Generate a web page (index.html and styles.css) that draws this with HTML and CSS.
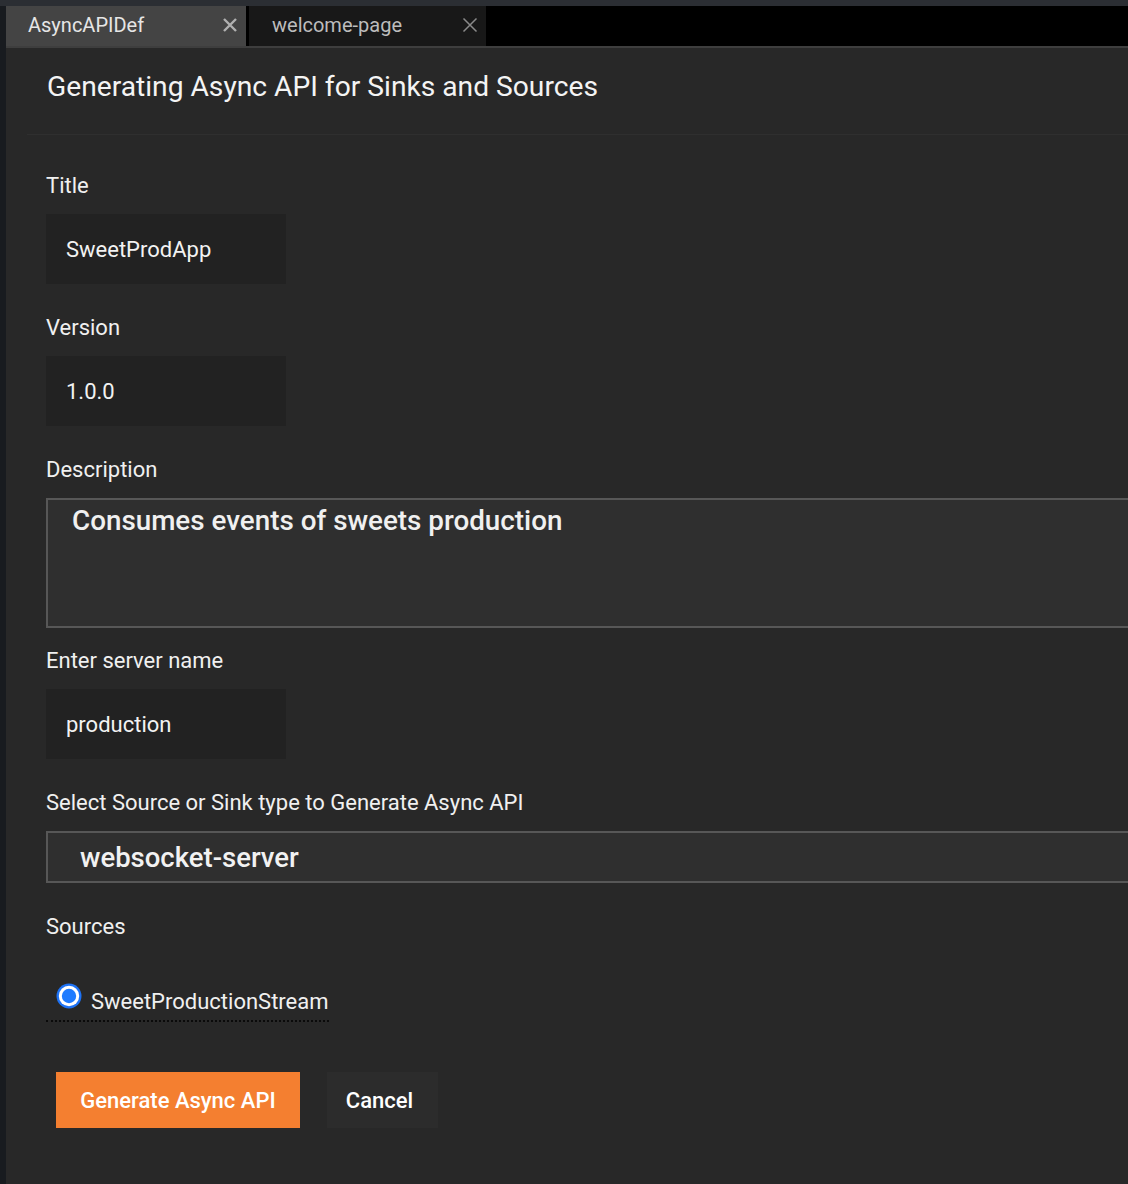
FILE: index.html
```html
<!DOCTYPE html>
<html>
<head>
<meta charset="utf-8">
<link rel="stylesheet" href="styles.css">
</head>
<body>
<div class="topstrip"></div>
<div class="shell">
  <div class="leftstrip"></div>
  <div class="main">
    <div class="tabbar">
      <div class="tab active">
        <span class="tab-label">AsyncAPIDef</span>
        <svg class="close" width="16" height="16" viewBox="0 0 16 16"><path d="M2 2 L14 14 M14 2 L2 14" stroke="#b0b0b0" stroke-width="2.4" stroke-linecap="butt"/></svg>
      </div>
      <div class="tab">
        <span class="tab-label">welcome-page</span>
        <svg class="close thin" width="16" height="16" viewBox="0 0 16 16"><path d="M1.5 1.5 L14.5 14.5 M14.5 1.5 L1.5 14.5" stroke="#8a8a8a" stroke-width="1.5"/></svg>
      </div>
    </div>
    <div class="content">
      <div class="header">
        <h1>Generating Async API for Sinks and Sources</h1>
      </div>
      <form class="form">
        <label class="label">Title</label>
        <div class="input">SweetProdApp</div>
        <label class="label">Version</label>
        <div class="input">1.0.0</div>
        <label class="label">Description</label>
        <div class="textarea">Consumes events of sweets production</div>
        <label class="label">Enter server name</label>
        <div class="input">production</div>
        <label class="label">Select Source or Sink type to Generate Async API</label>
        <div class="select">websocket-server</div>
        <label class="label">Sources</label>
        <div class="radio-row">
          <span class="radio-item">
            <svg class="radio" width="26" height="26" viewBox="0 0 26 26"><circle cx="13" cy="13" r="12.5" fill="#1d72f5"/><circle cx="13" cy="13" r="10.2" fill="#ffffff"/><circle cx="13" cy="13" r="7.2" fill="#1f7bff"/></svg>
            <span class="radio-label">SweetProductionStream</span>
          </span>
        </div>
        <div class="buttons">
          <button type="button" class="btn primary">Generate Async API</button>
          <button type="button" class="btn secondary">Cancel</button>
        </div>
      </form>
    </div>
  </div>
</div>
</body>
</html>
```
FILE: styles.css
```css
* { box-sizing: border-box; }
html, body {
  margin: 0;
  padding: 0;
  background: #282828;
  font-family: Roboto, "Liberation Sans", sans-serif;
  color: #f0f0f0;
}
body {
  width: 1128px;
  height: 1184px;
  overflow: hidden;
}
.topstrip {
  height: 6px;
  background: #2b2e33;
}
.shell {
  display: flex;
  height: 1178px;
}
.leftstrip {
  width: 6px;
  flex: none;
  background: #181b1f;
}
.main {
  flex: 1;
  min-width: 0;
  display: flex;
  flex-direction: column;
  background: #282828;
  overflow: hidden;
}
.tabbar {
  display: flex;
  height: 42px;
  background: #000;
  border-bottom: 2px solid #3e3e3e;
  flex: none;
}
.tab {
  display: flex;
  align-items: center;
  justify-content: space-between;
  height: 40px;
  font-size: 20px;
  line-height: 24px;
  padding-bottom: 2px;
}
.tab.active {
  width: 240px;
  background: #444444;
  color: #e6e6e6;
  padding-left: 22px;
  padding-right: 8px;
  margin-right: 3px;
}
.tab:not(.active) {
  width: 237px;
  background: #181818;
  color: #bdbdbd;
  padding-left: 23px;
  padding-right: 8px;
}
.close { flex: none; }
.content {
  flex: 1;
}
.header {
  margin-left: 21px;
  padding: 23px 0 31px 20px;
  border-bottom: 1px solid #2f2f2f;
}
h1 {
  margin: 0;
  font-size: 28.2px;
  line-height: 32px;
  font-weight: 400;
  color: #f4f4f4;
}
.form {
  display: flex;
  flex-direction: column;
  align-items: flex-start;
  padding: 38px 0 0 40px;
}
.label {
  display: block;
  font-size: 22px;
  line-height: 26px;
  color: #f0f0f0;
  margin-bottom: 15px;
}
.input {
  width: 240px;
  height: 70px;
  background: #222222;
  padding-left: 20px;
  display: flex;
  align-items: center;
  font-size: 22px;
  color: #f2f2f2;
  margin-bottom: 31px;
}
.textarea {
  width: 1200px;
  height: 130px;
  border: 2px solid #575757;
  background: #2f2f2f;
  padding: 5px 24px;
  font-size: 27.8px;
  line-height: 32px;
  font-weight: 500;
  color: #f0f0f0;
  margin-bottom: 20px;
}
.select {
  width: 1200px;
  height: 52px;
  border: 2px solid #575757;
  background: #2f2f2f;
  padding-left: 32px;
  display: flex;
  align-items: center;
  font-size: 27.5px;
  font-weight: 500;
  color: #f2f2f2;
  margin-bottom: 31px;
}
.radio-row {
  margin-top: 28px;
}
.radio-item {
  display: flex;
  align-items: flex-start;
  gap: 9px;
  padding: 0 0 5px 10px;
  border-bottom: 2px dotted #0a0a0a;
}
.radio { flex: none; }
.radio-label {
  font-size: 22px;
  line-height: 26px;
  margin-top: 6px;
  color: #f0f0f0;
}
.buttons {
  display: flex;
  gap: 27px;
  margin: 50px 0 0 10px;
}
.btn {
  height: 56px;
  border: none;
  font-family: Roboto, "Liberation Sans", sans-serif;
  font-size: 22px;
  font-weight: 500;
  color: #ffffff;
  cursor: pointer;
  padding: 0;
}
.btn.primary {
  width: 244px;
  background: #f47f30;
}
.btn.secondary {
  width: 111px;
  background: #2c2c2c;
  padding-right: 6px;
}
```
